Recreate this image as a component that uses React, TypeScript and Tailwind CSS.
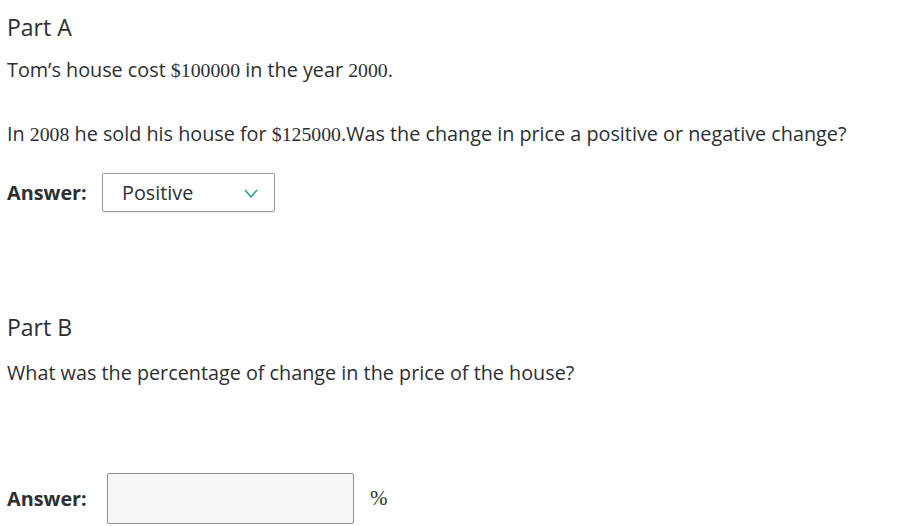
const num = "font-['Liberation_Serif',serif]";

export default function App() {
  return (
    <div className="w-[921px] h-[526px] bg-white text-[#2b2f34] font-['Open_Sans',sans-serif] px-[7px] overflow-hidden">
      <div className="pt-[12px] text-[23px] leading-[30px]">Part A</div>
      <p className="mt-[14px] text-[19.8px] leading-[28px]">
        Tom’s house cost <span className={num}>$100000</span> in the year <span className={num}>2000</span>.
      </p>
      <p className="mt-[36px] text-[19.8px] leading-[28px]">
        In <span className={num}>2008</span> he sold his house for <span className={num}>$125000</span>.Was the change in price a positive or negative change?
      </p>
      <div className="mt-[25px] flex items-center">
        <span className="text-[19.8px] font-bold w-[95px]">Answer:</span>
        <div className="w-[173px] h-[39px] border border-[#9a9a9a] rounded-[2px] flex items-center justify-between pl-[19px] pr-[16px] text-[19.8px] shadow-[0_1px_1px_rgba(0,0,0,0.08)]">
          <span>Positive</span>
          <svg width="14" height="9" viewBox="0 0 14 9" fill="none" className="mt-[1px]">
            <polyline points="1,1 7,8 13,1" stroke="#1ea388" strokeWidth="1.5" />
          </svg>
        </div>
      </div>
      <div className="mt-[100px] text-[23px] leading-[30px]">Part B</div>
      <p className="mt-[17px] text-[19.8px] leading-[28px]">What was the percentage of change in the price of the house?</p>
      <div className="mt-[86px] flex items-center">
        <span className="text-[19.8px] font-bold w-[100px]">Answer:</span>
        <div className="w-[247px] h-[51px] border border-[#8f8f8f] rounded-[2px] bg-[#f6f6f6]" />
        <span className={`ml-[16px] text-[21px] ${num}`}>%</span>
      </div>
    </div>
  );
}
